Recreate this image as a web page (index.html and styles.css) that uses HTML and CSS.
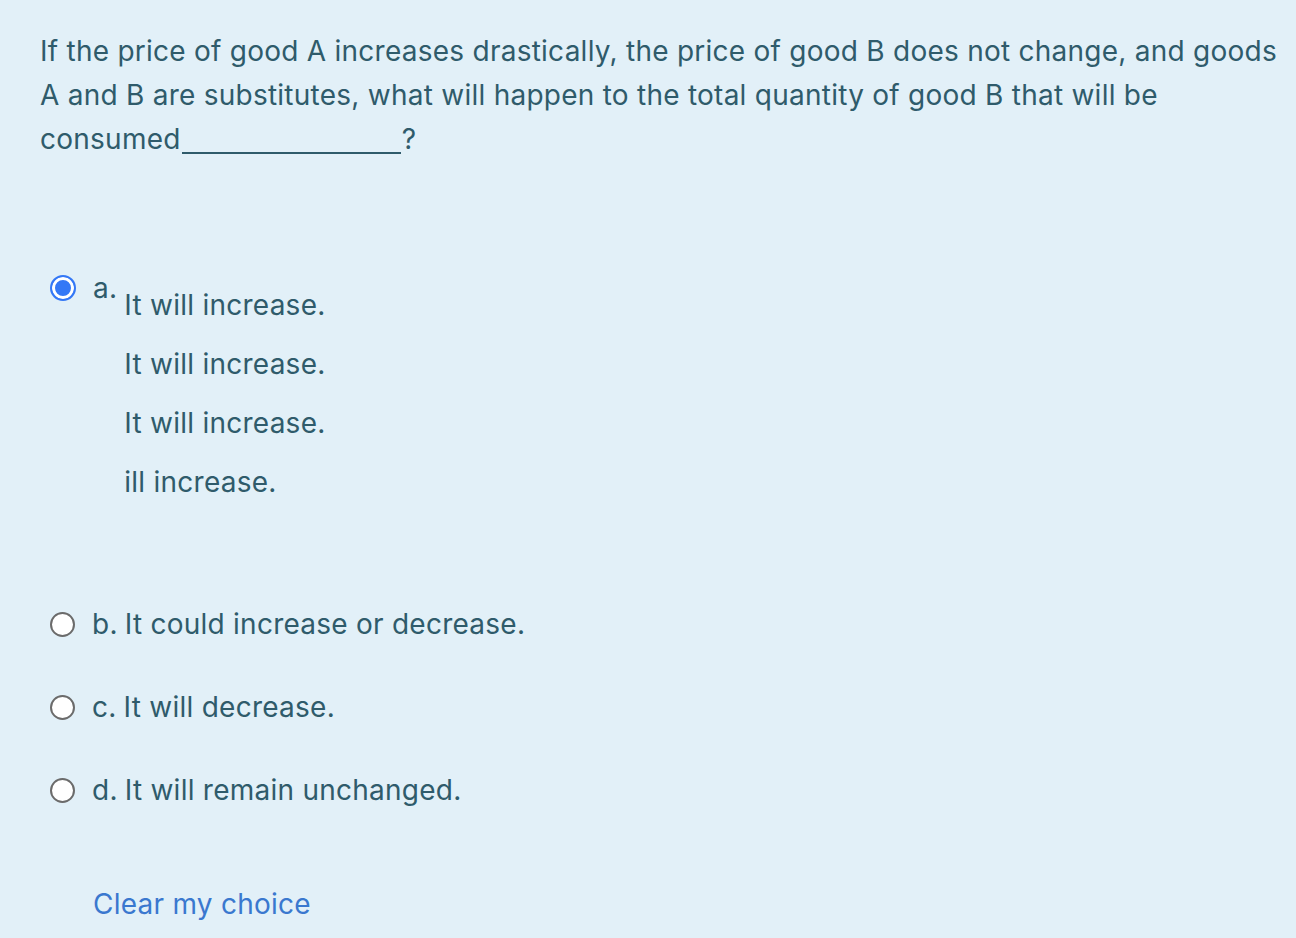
FILE: index.html
```html
<!DOCTYPE html>
<html>
<head>
<meta charset="utf-8">
<link rel="stylesheet" href="styles.css">
</head>
<body>
<div class="page">
  <div class="qtext">If the price of good A increases drastically, the price of good B does not change, and goods A and B are substitutes, what will happen to the total quantity of good B that will be consumed<span class="blank"></span><span class="qmark">?</span></div>
  <div class="answers">
    <div class="opt opt-a">
      <span class="radio checked"></span>
      <span class="letter">a.</span>
      <div class="body">
        <p>It will increase.</p>
        <p>It will increase.</p>
        <p>It will increase.</p>
        <p>ill increase.</p>
      </div>
    </div>
    <div class="opt opt-b">
      <span class="radio"></span>
      <span class="letter">b.</span>
      <span class="text">It could increase or decrease.</span>
    </div>
    <div class="opt">
      <span class="radio"></span>
      <span class="letter">c.</span>
      <span class="text">It will decrease.</span>
    </div>
    <div class="opt">
      <span class="radio"></span>
      <span class="letter">d.</span>
      <span class="text">It will remain unchanged.</span>
    </div>
  </div>
  <a class="clear" href="#">Clear my choice</a>
</div>
</body>
</html>
```
FILE: styles.css
```css
html, body {
  margin: 0;
  padding: 0;
  background: #e2f0f8;
}
body {
  font-family: Inter, "Open Sans", sans-serif;
  font-size: 28px;
  letter-spacing: 0.25px;
  color: #2f5b6b;
}
.page {
  padding: 29px 8px 0 40px;
}
.qtext {
  line-height: 44px;
}
.blank {
  display: inline-block;
  width: 219px;
  height: 1px;
  border-bottom: 2px solid #2f5b6b;
  vertical-align: -5px;
  margin-left: 1px;
  margin-right: 1px;
}
.answers {
  margin-top: 112px;
  padding-left: 10px;
  display: flex;
  flex-direction: column;
}
.opt {
  display: flex;
  align-items: center;
  height: 36px;
  margin-bottom: 47px;
}
.opt:last-child {
  margin-bottom: 78px;
}
.opt-a {
  align-items: flex-start;
  height: auto;
  margin-bottom: 106px;
}
.radio {
  box-sizing: border-box;
  width: 25px;
  height: 25px;
  border-radius: 50%;
  border: 2px solid #6b6b6b;
  background: #fff;
  flex: none;
}
.radio.checked {
  width: 26px;
  height: 26px;
  border: 2px solid #3478f6;
  background: #3478f6;
  box-shadow: inset 0 0 0 3px #fff;
  margin-top: 2px;
}
.letter {
  margin-left: 17px;
}
.text {
  margin-left: 7px;
}
.opt-a .letter {
  line-height: 30px;
}
.body {
  margin-left: 7px;
  padding-top: 14px;
}
.body p {
  margin: 0 0 23px 0;
  line-height: 36px;
}
.body p:last-child {
  margin-bottom: 0;
}
.clear {
  display: inline-block;
  margin-left: 53px;
  color: #3a78cf;
  text-decoration: none;
  line-height: 36px;
}
```
